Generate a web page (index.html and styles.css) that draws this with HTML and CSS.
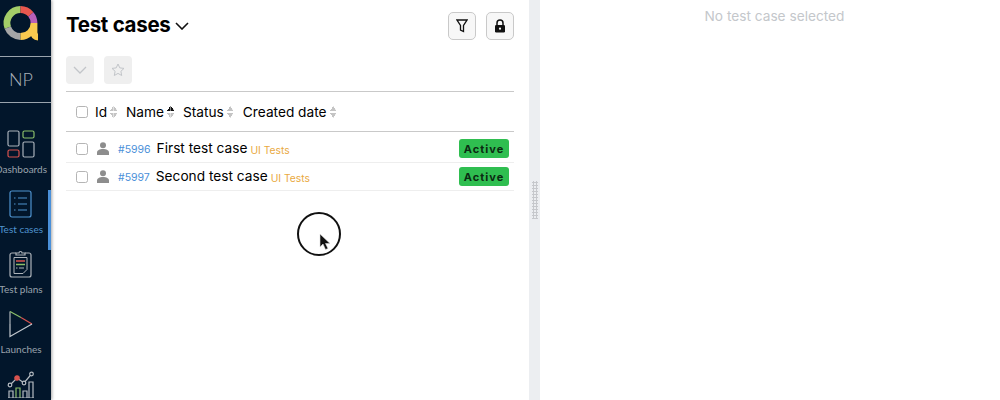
FILE: index.html
```html
<!DOCTYPE html>
<html lang="en">
<head>
<meta charset="UTF-8">
<title>Test cases</title>
<link rel="stylesheet" href="styles.css">
</head>
<body>
<div class="app">
  <nav class="sidebar">
    <div class="logo">
      <svg width="38" height="38" viewBox="0 0 38 38" fill="none" stroke-width="6.800">
        <path d="M6.810 23.620A13.500 13.500 0 0 1 19.500 5.500" stroke="#a3cd68"/>
        <path d="M19.500 5.500A13.500 13.500 0 0 1 29.840 10.320" stroke="#e8574f"/>
        <path d="M29.840 10.320A13.500 13.500 0 0 1 33 19" stroke="#b95fb8"/>
        <path d="M19.500 32.500A13.500 13.500 0 0 1 6.810 23.620" stroke="#a6a6a6"/>
        <path d="M33 19V28Q33 33 37 33M33 19A13.500 13.500 0 0 1 19.500 32.500" stroke="#f8c94f"/>
      </svg>
    </div>
    <div class="avatar">NP</div>
    <a class="nav-item">
      <svg width="28" height="28" viewBox="0 0 28 28" fill="none" stroke="#a9b1ba" stroke-width="1.200">
        <rect x="1" y="1" width="11" height="15" rx="1.500"/>
        <rect x="16" y="1" width="11" height="7" rx="1.500" stroke="#8bbf6a"/>
        <rect x="1" y="20" width="11" height="7" rx="1.500" stroke="#d9534f"/>
        <rect x="16" y="12" width="11" height="15" rx="1.500"/>
      </svg>
      <span>Dashboards</span>
    </a>
    <a class="nav-item active">
      <svg width="28" height="28" viewBox="0 0 28 28" fill="none" stroke="#4f93cf" stroke-width="1.200">
        <rect x="3" y="1" width="21" height="26" rx="2"/>
        <path d="M7 8h1.500M11 8h9M7 14h1.500M11 14h9M7 20h1.500M11 20h9"/>
      </svg>
      <span>Test cases</span>
    </a>
    <a class="nav-item">
      <svg width="28" height="28" viewBox="0 0 28 28" fill="none" stroke="#aeb4ba" stroke-width="1.200">
        <path d="M9 3H5a2 2 0 0 0-2 2v20a2 2 0 0 0 2 2h17a2 2 0 0 0 2-2V5a2 2 0 0 0-2-2h-4"/>
        <path d="M9 5V3h3a1.500 1.500 0 0 1 3 0h3v2z"/>
        <path d="M7 7.500h13v12l-4 4H7z" stroke-width="1"/>
        <path d="M9 11h9" stroke="#d9534f" stroke-width="1.500"/>
        <path d="M9 14.500h9" stroke="#8bbf6a" stroke-width="1.500"/>
        <path d="M9 18h1.500M12 18h5"/>
      </svg>
      <span>Test plans</span>
    </a>
    <a class="nav-item">
      <svg width="28" height="28" viewBox="0 0 28 28" fill="none" stroke-width="1.200">
        <path d="M3 1.500V14" stroke="#aeb4ba"/>
        <path d="M3 1.500L14 7.500" stroke="#8bbf6a"/>
        <path d="M14 7.500L25 14" stroke="#d9534f"/>
        <path d="M25 14L3 26.500V14" stroke="#c3c8ce"/>
      </svg>
      <span>Launches</span>
    </a>
    <a class="nav-item">
      <svg width="28" height="28" viewBox="0 0 28 28" fill="none" stroke="#b6bcc2" stroke-width="1.200">
        <path d="M3 15L10 8l7 5 7.500-9"/>
        <circle cx="3" cy="15" r="1.800" fill="#02162b"/>
        <circle cx="10" cy="8" r="2.200" fill="#d9534f" stroke="#d9534f"/>
        <circle cx="17" cy="13" r="1.800" fill="#02162b"/>
        <circle cx="24.500" cy="4" r="1.800" fill="#02162b"/>
        <path d="M2 28V21h4v7M16 28V21h4v7"/>
        <path d="M9 28V18h4v10" stroke="#8bbf6a"/>
        <path d="M22 28V12h4v16M1 28h26"/>
      </svg>
    </a>
  </nav>

  <section class="list-pane">
    <div class="title-row">
      <h1>Test cases</h1>
      <svg class="title-caret" width="14" height="8" viewBox="0 0 14 8" fill="none" stroke="#111" stroke-width="1.600">
        <path d="M1 1l6 6 6-6"/>
      </svg>
      <div class="title-tools">
        <button class="tool-btn">
          <svg width="12" height="14" viewBox="0 0 12 14" fill="none" stroke="#111" stroke-width="1.300">
            <path d="M1 1h10L7.500 6.500V12.500L4.500 11V6.500z"/>
          </svg>
        </button>
        <button class="tool-btn">
          <svg width="12" height="14" viewBox="0 0 12 14">
            <path d="M3 6V4a3 3 0 0 1 6 0v2" fill="none" stroke="#111" stroke-width="1.500"/>
            <rect x="1" y="6" width="10" height="7.500" rx="1.200" fill="#111"/>
            <circle cx="6" cy="9.700" r="1.100" fill="#fff"/>
          </svg>
        </button>
      </div>
    </div>

    <div class="actions">
      <button class="action-btn">
        <svg width="14" height="8" viewBox="0 0 14 8" fill="none" stroke="#c2c5c9" stroke-width="1.300">
          <path d="M1 1l6 6 6-6"/>
        </svg>
      </button>
      <button class="action-btn">
        <svg width="14" height="14" viewBox="0 0 14 14" fill="none" stroke="#c2c5c9" stroke-width="1">
          <path d="M7 1l1.800 3.900 4.200.5-3.100 2.900.8 4.200L7 10.400l-3.700 2.100.8-4.200L1 5.400l4.200-.5z"/>
        </svg>
      </button>
    </div>

    <div class="table-head">
      <span class="check"></span>
      <span class="col col-id">Id<i class="sort"></i></span>
      <span class="col col-name">Name<i class="sort sort-up"></i></span>
      <span class="col col-status">Status<i class="sort"></i></span>
      <span class="col">Created date<i class="sort"></i></span>
    </div>

    <div class="rows">
      <div class="row">
        <span class="check"></span>
        <svg class="person" width="12" height="13" viewBox="0 0 12 13" fill="#8d8d8d">
          <circle cx="6" cy="3.200" r="3"/>
          <path d="M0 13v-2.500C0 8.300 2.500 7 6 7s6 1.300 6 3.500V13z"/>
        </svg>
        <a class="case-id">#5996</a>
        <span class="case-name">First test case</span>
        <span class="case-tag">UI Tests</span>
        <span class="badge">Active</span>
      </div>
      <div class="row">
        <span class="check"></span>
        <svg class="person" width="12" height="13" viewBox="0 0 12 13" fill="#8d8d8d">
          <circle cx="6" cy="3.200" r="3"/>
          <path d="M0 13v-2.500C0 8.300 2.500 7 6 7s6 1.300 6 3.500V13z"/>
        </svg>
        <a class="case-id">#5997</a>
        <span class="case-name">Second test case</span>
        <span class="case-tag">UI Tests</span>
        <span class="badge">Active</span>
      </div>
    </div>

    <div class="click-ring">
      <svg width="12" height="16" viewBox="0 0 12 16">
        <path d="M1 0v13l3-3 2.500 5.500 2.500-1L6.500 9.500H11z" fill="#111" stroke="#ddd" stroke-width=".6"/>
      </svg>
    </div>
  </section>

  <div class="splitter"><div class="grip"></div></div>

  <section class="detail-pane">No test case selected</section>
</div>
</body>
</html>
```

FILE: styles.css
```css
* {
  box-sizing: border-box;
}

body {
  margin: 0;
  height: 400px;
  overflow: hidden;
  background-color: #fff;
  font-family: Inter, "Liberation Sans", sans-serif;
  color: #000;
}

.app {
  display: flex;
  height: 400px;
}

/* sidebar */
.sidebar {
  width: 51px;
  flex-shrink: 0;
  overflow: hidden;
  background-color: #02162b;
  box-shadow: 1px 0 3px rgba(0, 0, 0, 0.35);
  z-index: 1;
}

.logo {
  height: 57px;
  padding-left: 1px;
  padding-top: 4px;
  border-bottom: 1px solid #9aa3ad;
}

.avatar {
  height: 46px;
  border-bottom: 1px solid #9aa3ad;
  padding-right: 9px;
  padding-bottom: 2px;
  display: flex;
  align-items: center;
  justify-content: center;
  font-family: Lato, sans-serif;
  font-weight: 300;
  font-size: 18px;
  color: #a9b1ba;
}

.nav-item {
  height: 60px;
  width: 51px;
  padding-right: 9px;
  display: flex;
  flex-direction: column;
  align-items: center;
  font-family: Lato, sans-serif;
  font-size: 10px;
  color: #9aa3ad;
  white-space: nowrap;
}

.nav-item:first-of-type {
  margin-top: 27px;
}

.nav-item span {
  margin-top: 5px;
}

.nav-item.active {
  color: #4f93cf;
  border-right: 3px solid #4a90d9;
  padding-right: 6px;
}

/* list */
.list-pane {
  width: 478px;
  flex-shrink: 0;
  padding: 12px 15px 0;
  position: relative;
}

.title-row {
  height: 28px;
  display: flex;
  align-items: center;
}

h1 {
  margin: -3px 0 0;
  font-size: 20.500px;
  font-weight: 700;
  letter-spacing: -0.3px;
}

.title-caret {
  margin-left: 5px;
  margin-top: 0;
}

.title-tools {
  margin-left: auto;
  display: flex;
  gap: 10px;
}

.tool-btn {
  width: 28px;
  height: 28px;
  padding: 0;
  display: flex;
  align-items: center;
  justify-content: center;
  background-color: #f7f7f7;
  border: 1px solid #c9c9c9;
  border-radius: 5px;
}

.actions {
  display: flex;
  gap: 10px;
  margin-top: 16px;
  padding-bottom: 7px;
  border-bottom: 1px solid #c9c9c9;
}

.action-btn {
  width: 28px;
  height: 28px;
  padding: 0;
  display: flex;
  align-items: center;
  justify-content: center;
  background-color: #efefef;
  border: none;
  border-radius: 4px;
}

.table-head {
  height: 40px;
  padding-left: 10px;
  display: flex;
  align-items: center;
  font-size: 13.700px;
  border-bottom: 1px solid #c9c9c9;
}

.check {
  width: 12px;
  height: 12px;
  flex-shrink: 0;
  background-color: #fff;
  border: 1px solid #b5b5b5;
  border-radius: 2.500px;
}

.col {
  display: flex;
  align-items: center;
}

.col-id {
  margin-left: 7px;
  margin-right: 9px;
}

.col-name {
  margin-right: 9px;
}

.col-status {
  margin-right: 9px;
}

/* two small triangles, up and down */
.sort {
  width: 7px;
  height: 12px;
  margin-left: 3px;
  background:
    linear-gradient(to top left, #c4c4c4 50%, transparent 51%) 0 0 / 3.500px 5px no-repeat,
    linear-gradient(to top right, #c4c4c4 50%, transparent 51%) 3.500px 0 / 3.500px 5px no-repeat,
    linear-gradient(to bottom left, #c4c4c4 50%, transparent 51%) 0 7px / 3.500px 5px no-repeat,
    linear-gradient(to bottom right, #c4c4c4 50%, transparent 51%) 3.500px 7px / 3.500px 5px no-repeat;
}

.sort-up {
  background:
    linear-gradient(to top left, #111 50%, transparent 51%) 0 0 / 3.500px 5px no-repeat,
    linear-gradient(to top right, #111 50%, transparent 51%) 3.500px 0 / 3.500px 5px no-repeat,
    linear-gradient(to bottom left, #c4c4c4 50%, transparent 51%) 0 7px / 3.500px 5px no-repeat,
    linear-gradient(to bottom right, #c4c4c4 50%, transparent 51%) 3.500px 7px / 3.500px 5px no-repeat;
}

.rows {
  padding-top: 3px;
}

.row {
  height: 28px;
  padding-left: 10px;
  padding-right: 5px;
  display: flex;
  align-items: center;
  border-bottom: 1px solid #eee;
  white-space: nowrap;
}

.person {
  margin-left: 9px;
  margin-right: 9px;
}

.case-id {
  font-size: 10.500px;
  color: #4a90d9;
  margin-right: 6px;
  margin-top: 1px;
}

.case-name {
  font-size: 13.700px;
  margin-right: 3px;
  margin-top: -1px;
}

.case-tag {
  font-size: 10.300px;
  margin-top: 2px;
  color: #e9a93f;
}

.badge {
  margin-left: auto;
  width: 50px;
  height: 19px;
  display: flex;
  align-items: center;
  justify-content: center;
  background-color: #2fbe50;
  border-radius: 3px;
  font-size: 11px;
  font-weight: 700;
  letter-spacing: 1px;
  color: #0b2a12;
}

/* the recording's click marker, over the list */
.click-ring {
  position: absolute;
  left: 246px;
  top: 212px;
  width: 44px;
  height: 44px;
  padding: 20px 0 0 20px;
  border: 2px solid #111;
  border-radius: 50%;
  background-color: #fff;
}

.click-ring svg {
  display: block;
}

.splitter {
  width: 11px;
  flex-shrink: 0;
  display: flex;
  align-items: center;
  justify-content: center;
  background-color: #eceef1;
}

.grip {
  width: 6px;
  height: 38px;
  background-image: radial-gradient(#c6c8cc 1px, transparent 1.200px);
  background-size: 3px 3px;
}

.detail-pane {
  flex: 1;
  padding-top: 8px;
  padding-left: 9px;
  text-align: center;
  font-size: 13.700px;
  color: #c4c7cb;
}
```
